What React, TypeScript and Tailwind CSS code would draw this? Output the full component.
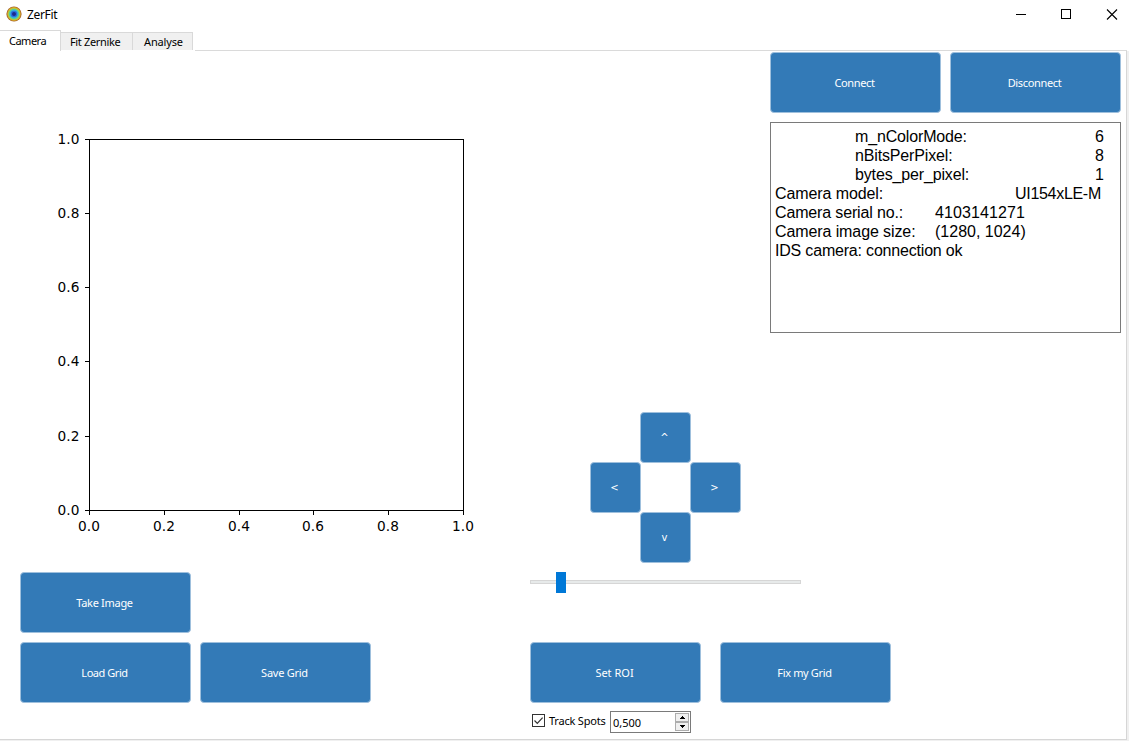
import React from "react";

const PushButton = ({ label, text = "" }: { label: string; text?: string }) => (
  <button className="flex h-[61px] w-[171px] shrink-0 items-center justify-center rounded-[4px] border border-[#9fc0dd] bg-[#337ab7] pr-[2px] text-[11px] leading-[14px] text-white">
    <span className={text}>{label}</span>
  </button>
);

const ArrowButton = ({ label, cell }: { label: string; cell: string }) => (
  <button
    className={`flex h-[51px] w-[51px] items-center justify-center rounded-[4px] border border-[#9fc0dd] bg-[#337ab7] pr-[2px] leading-[14px] text-white ${cell}`}
  >
    {label}
  </button>
);

const AppIcon = () => (
  <svg width="16" height="16" viewBox="0 0 16 16">
    <circle cx="8" cy="8" r="7.6" fill="#9c5a2c" />
    <circle cx="8" cy="8" r="6.9" fill="#d6a526" />
    <circle cx="8" cy="8" r="6.1" fill="#b5cf3c" />
    <circle cx="8" cy="8" r="5.3" fill="#5fd08a" />
    <circle cx="8" cy="8" r="4.4" fill="#37b4dc" />
    <circle cx="8" cy="8" r="3.3" fill="#2d6fdc" />
    <circle cx="8" cy="8" r="2" fill="#1b2a8c" />
  </svg>
);

const TitleBar = () => (
  <header className="flex h-[30px] shrink-0 items-center pl-[6px]">
    <div className="mt-[-3px]">
      <AppIcon />
    </div>
    <span className="mt-[-1px] ml-[5px] text-[12px] leading-[16px] tracking-[-0.35px] text-black">ZerFit</span>
    <svg className="mr-[17px] ml-auto" width="102" height="30" viewBox="0 0 102 30" fill="none" stroke="#000">
      <path d="M0 14.5H10M45.5 9.5h9v9h-9z" shapeRendering="crispEdges" />
      <path d="M91 9.5l10 10M101 9.5l-10 10" strokeWidth="1.1" />
    </svg>
  </header>
);

const TabBar = () => (
  <nav className="flex h-[21px] w-[1127px] shrink-0 items-end text-[11px] leading-[14px] text-black">
    <div className="h-[21px] w-[61px] border-t border-r border-[#d9d9d9] bg-white pt-[3px] pl-[9px]">
      <span className="tracking-[-0.5px]">Camera</span>
    </div>
    <div className="mb-[1px] h-[18px] w-[72px] border-t border-r border-[#d9d9d9] bg-[#f0f0f0] pt-[2px] pl-[9px]">
      <span className="tracking-[-0.35px]">Fit Zernike</span>
    </div>
    <div className="mb-[1px] h-[18px] w-[60px] border-t border-r border-[#d9d9d9] bg-[#f0f0f0] pt-[2px] pl-[11px]">
      <span className="tracking-[-0.15px]">Analyse</span>
    </div>
    <div className="ml-[2px] h-px flex-1 bg-[#dadada]" />
  </nav>
);

const ticks = [
  { x: 89.5, y: 510.5, label: "0.0" },
  { x: 164.5, y: 436.5, label: "0.2" },
  { x: 239.5, y: 361.5, label: "0.4" },
  { x: 313.5, y: 287.5, label: "0.6" },
  { x: 388.5, y: 213.5, label: "0.8" },
  { x: 463.5, y: 139.5, label: "1.0" },
];

const Plot = () => (
  <svg width="530" height="521" viewBox="0 51 530 521" fill="none" className="block shrink-0">
    <g stroke="#000" shapeRendering="crispEdges">
      <rect x="89.5" y="139.5" width="374" height="371" />
      {ticks.map((t) => (
        <path key={t.label} d={`M${t.x} 511V515M85 ${t.y}H89`} />
      ))}
    </g>
    <g fill="#000" fontSize="13.7" className="font-['DejaVu_Sans',sans-serif]">
      {ticks.map((t) => (
        <React.Fragment key={t.label}>
          <text x={t.x - 0.5} y="531" textAnchor="middle">{t.label}</text>
          <text x="79.4" y={t.y + 4.5} textAnchor="end">{t.label}</text>
        </React.Fragment>
      ))}
    </g>
  </svg>
);

const log = [
  { label: "\tm_nColorMode:", value: "\t\t6", labelSpacing: "tracking-[-0.15px]", valueSpacing: "" },
  { label: "\tnBitsPerPixel:", value: "\t\t8", labelSpacing: "tracking-[-0.15px]", valueSpacing: "" },
  { label: "\tbytes_per_pixel:", value: "\t\t1", labelSpacing: "tracking-[-0.15px]", valueSpacing: "" },
  { label: "Camera model:", value: "\t\tUI154xLE-M", labelSpacing: "tracking-[-0.1px]", valueSpacing: "tracking-[-0.3px]" },
  { label: "Camera serial no.:", value: "\t4103141271", labelSpacing: "tracking-[-0.15px]", valueSpacing: "tracking-[0.1px]" },
  { label: "Camera image size:", value: "\t(1280, 1024)", labelSpacing: "tracking-[-0.1px]", valueSpacing: "" },
  { label: "IDS camera: connection ok", value: "", labelSpacing: "tracking-[-0.19px]", valueSpacing: "" },
];

const Console = () => (
  <div className="mt-[9px] ml-[240px] h-[211px] w-[351px] shrink-0 border border-[#7a7a7a] bg-white pt-[4px] pl-[4px] font-['Liberation_Sans',Arial,sans-serif] text-[16px] leading-[19px] whitespace-pre text-black [tab-size:80px]">
    {log.map((line) => (
      <div key={line.label}>
        <span className={line.labelSpacing}>{line.label}</span>
        <span className={line.valueSpacing}>{line.value}</span>
      </div>
    ))}
  </div>
);

const Slider = () => (
  <div className="relative mt-[9px] h-[21px] w-[271px] shrink-0 pt-[8px]">
    <div className="h-[4px] w-full border border-[#d6d6d6] bg-[#e7eaea]" />
    <div className="absolute top-0 left-[26px] h-[21px] w-[10px] bg-[#0078d7]" />
  </div>
);

const TrackRow = () => (
  <div className="mt-[8px] flex h-[22px] shrink-0 text-[11px] leading-[14px] text-black">
    <svg className="mt-[3px] ml-[2px]" width="13" height="13" viewBox="0 0 13 13" fill="none">
      <rect x="0.5" y="0.5" width="12" height="12" stroke="#333" fill="#fff" shapeRendering="crispEdges" />
      <path d="M2.5 6.5l2.8 2.8 5.3-5.6" stroke="#333" strokeWidth="1.2" />
    </svg>
    <span className="mt-[3px] ml-[4px] w-[61px] tracking-[-0.2px] whitespace-nowrap">Track Spots</span>
    <div className="flex h-[22px] w-[81px] border border-[#7a7a7a] bg-white pr-px">
      <span className="mt-[4px] ml-[2px] flex-1">0,500</span>
      <div className="flex flex-col pt-px">
        <div className="flex h-[9px] w-[14px] items-center justify-center border border-[#adadad] bg-[#f0f0f0]">
          <svg width="5" height="3" shapeRendering="crispEdges"><path d="M2 0h1v1h1v1h1v1H0V2h1V1h1z" /></svg>
        </div>
        <div className="flex h-[9px] w-[14px] items-center justify-center border border-[#adadad] bg-[#f0f0f0]">
          <svg width="5" height="3" shapeRendering="crispEdges"><path d="M0 0h5v1H4v1H3v1H2V2H1V1H0z" /></svg>
        </div>
      </div>
    </div>
  </div>
);

export default function App() {
  return (
    <div className="flex h-[741px] w-[1135px] flex-col overflow-hidden bg-white font-['Noto_Sans','Open_Sans',sans-serif]">
      <TitleBar />
      <TabBar />
      <div className="h-[690px] w-[1129px] bg-[#f0f0f0] pb-px">
        <main className="flex h-[689px] w-[1127px] border-r border-b border-[#d6d6d6] bg-white">
          <section className="flex w-[530px] shrink-0 flex-col">
            <Plot />
            <div className="ml-[20px] grid grid-cols-[171px_171px] gap-[9px]">
              <PushButton label="Take Image" text="tracking-[-0.3px]" />
              <div />
              <PushButton label="Load Grid" text="tracking-[-0.45px]" />
              <PushButton label="Save Grid" text="tracking-[-0.25px]" />
            </div>
          </section>
          <section className="flex flex-1 flex-col pt-px">
            <div className="ml-[240px] flex gap-[9px]">
              <PushButton label="Connect" text="tracking-[-0.35px]" />
              <PushButton label="Disconnect" text="tracking-[-0.35px]" />
            </div>
            <Console />
            <div className="mt-[79px] ml-[60px] grid h-[151px] shrink-0 grid-cols-[50px_50px_50px] grid-rows-[50px_50px_50px] font-['DejaVu_Sans',sans-serif] text-[10px]">
              <ArrowButton label="^" cell="col-start-2 row-start-1" />
              <ArrowButton label="<" cell="col-start-1 row-start-2" />
              <ArrowButton label=">" cell="col-start-3 row-start-2" />
              <ArrowButton label="v" cell="col-start-2 row-start-3" />
            </div>
            <Slider />
            <div className="mt-[49px] flex gap-[19px]">
              <PushButton label="Set ROI" />
              <PushButton label="Fix my Grid" text="tracking-[-0.35px]" />
            </div>
            <TrackRow />
          </section>
        </main>
      </div>
    </div>
  );
}
